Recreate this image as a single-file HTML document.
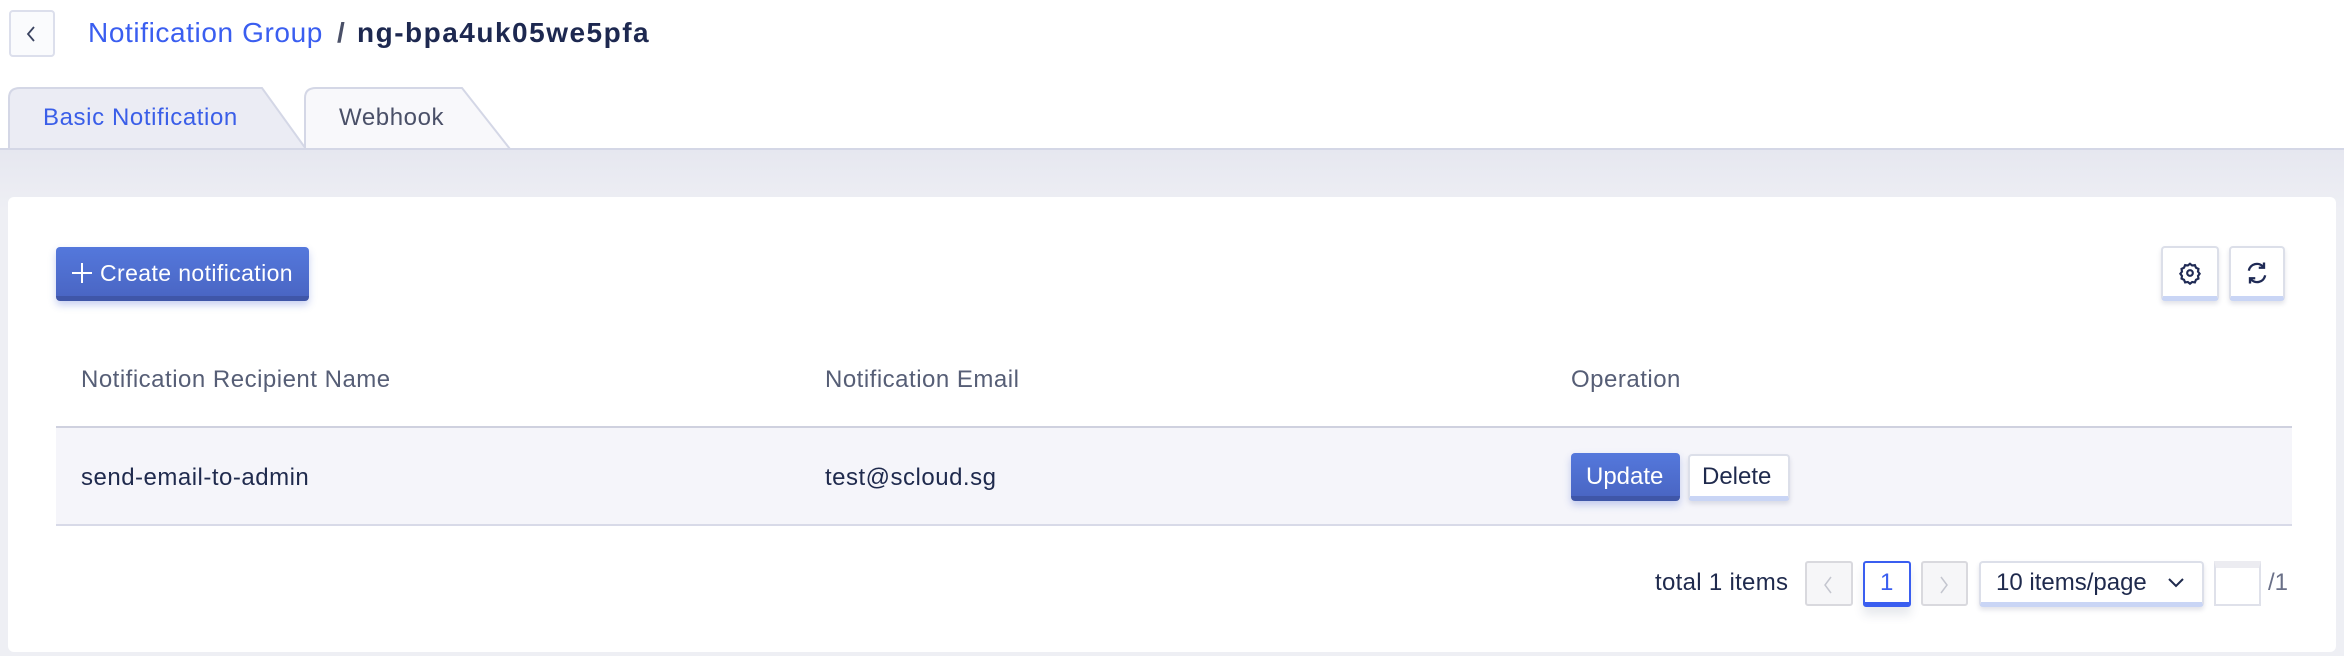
<!DOCTYPE html>
<html><head><meta charset="utf-8"><style>
*{box-sizing:border-box;margin:0;padding:0}
body{width:2344px;height:656px;background:#fff;font-family:"Liberation Sans",sans-serif;position:relative;overflow:hidden;color:#1f2a4d}
.a{position:absolute}
.btnw{position:absolute;background:#fff;border:2px solid #dcdfe9;border-bottom:5px solid #c9d5f5;border-radius:4px;box-shadow:0 3px 5px rgba(60,70,110,.15)}
.t{position:absolute;white-space:nowrap;line-height:1}
.tb{font-size:24px;letter-spacing:.5px}
</style></head><body>
<div class="a" style="left:9px;top:10px;width:46px;height:47px;border:2px solid #dcdfec;border-radius:4px;background:#fafbfd"></div>
<svg class="a" style="left:22px;top:24px" width="20" height="20" viewBox="0 0 20 20"><path d="M12 3 L6 10 L12 17" fill="none" stroke="#3a4360" stroke-width="1.8"/></svg>
<div class="t" style="left:88px;top:19px;font-size:28px;letter-spacing:.6px;color:#3a5ef0">Notification Group</div>
<div class="t" style="left:337px;top:19px;font-size:28px;color:#4a5068;font-weight:bold">/</div>
<div class="t" style="left:357px;top:19px;font-size:28px;letter-spacing:1.5px;color:#1d2850;font-weight:bold">ng-bpa4uk05we5pfa</div>
<svg class="a" style="left:0;top:84px" width="2344" height="70">
<path d="M9 65 L9 14 Q9 4 20 4 L262 4 L306 65 Z" fill="#ebecf4" stroke="#d4d7e6" stroke-width="2"/>
<path d="M305 65 L305 14 Q305 4 316 4 L462 4 L510 65 Z" fill="#f8f8fb" stroke="#d4d7e6" stroke-width="2"/>
<line x1="0" y1="65" x2="9" y2="65" stroke="#d4d7e6" stroke-width="2"/>
<line x1="510" y1="65" x2="2344" y2="65" stroke="#d4d7e6" stroke-width="2"/>
</svg>
<div class="t" style="left:43px;top:106px;font-size:24px;letter-spacing:.6px;color:#3a5ee8">Basic Notification</div>
<div class="t" style="left:339px;top:106px;font-size:24px;letter-spacing:.6px;color:#4a5068">Webhook</div>
<div class="a" style="left:0;top:150px;width:2344px;height:506px;background:linear-gradient(#e6e7f0,#eeeff4 60px,#eeeff4)"></div>
<div class="a" style="left:8px;top:197px;width:2328px;height:455px;background:#fff;border-radius:6px"></div>
<div class="a" style="left:56px;top:247px;width:253px;height:54px;background:linear-gradient(#5478dc,#4a66c4);border-bottom:5px solid #3f56a8;border-radius:4px;box-shadow:0 4px 8px rgba(70,100,210,.3)"></div>
<svg class="a" style="left:71px;top:262px" width="22" height="22"><path d="M11 1V21M1 11H21" stroke="#fff" stroke-width="2"/></svg>
<div class="t" style="left:100px;top:262px;font-size:23px;letter-spacing:.4px;color:#fff">Create notification</div>
<div class="btnw" style="left:2161px;top:246px;width:58px;height:55px"></div>
<svg class="a" style="left:2177px;top:260px" width="26" height="26" viewBox="0 0 24 24"><path d="M12 3.5l2 1.6 2.5-.4 1 2.4 2.3 1.1-.4 2.5 1.5 2-1.5 2 .4 2.5-2.3 1.1-1 2.4-2.5-.4-2 1.6-2-1.6-2.5.4-1-2.4-2.3-1.1.4-2.5-1.5-2 1.5-2-.4-2.5 2.3-1.1 1-2.4 2.5.4z" fill="none" stroke="#1f2a55" stroke-width="2"/><circle cx="12" cy="12" r="2.6" fill="none" stroke="#1f2a55" stroke-width="2"/></svg>
<div class="btnw" style="left:2229px;top:246px;width:56px;height:55px"></div>
<svg class="a" style="left:2243px;top:259px" width="28" height="28" viewBox="0 0 24 24"><path d="M5 10a7 7 0 0 1 12.5-3M19 14a7 7 0 0 1-12.5 3" fill="none" stroke="#1f2a55" stroke-width="2"/><path d="M18 3v4.5h-4.5M6 21v-4.5h4.5" fill="none" stroke="#1f2a55" stroke-width="2"/></svg>
<div class="t tb" style="left:81px;top:368px;color:#565e76">Notification Recipient Name</div>
<div class="t tb" style="left:825px;top:368px;color:#565e76">Notification Email</div>
<div class="t tb" style="left:1571px;top:368px;color:#565e76">Operation</div>
<div class="a" style="left:56px;top:426px;width:2236px;height:100px;background:#f5f5fa;border-top:2px solid #cfd1df;border-bottom:2px solid #d8dae8"></div>
<div class="t tb" style="left:81px;top:466px;color:#1f2a4d">send-email-to-admin</div>
<div class="t tb" style="left:825px;top:466px;color:#1f2a4d">test@scloud.sg</div>
<div class="a" style="left:1571px;top:453px;width:109px;height:48px;background:linear-gradient(#5478dc,#4a66c4);border-bottom:5px solid #3f56a8;border-radius:4px;box-shadow:0 4px 8px rgba(70,100,210,.3)"></div>
<div class="t" style="left:1586px;top:465px;font-size:24px;color:#fff">Update</div>
<div class="btnw" style="left:1688px;top:454px;width:102px;height:47px"></div>
<div class="t" style="left:1702px;top:465px;font-size:24px;color:#1f2a4d">Delete</div>
<div class="t" style="left:1655px;top:571px;font-size:24px;letter-spacing:.3px;color:#1f2a4d">total 1 items</div>
<div class="a" style="left:1805px;top:561px;width:48px;height:45px;background:#f6f6f8;border:2px solid #d9d9de;border-radius:3px"></div>
<svg class="a" style="left:1820px;top:574px" width="16" height="22"><path d="M11 3L5 11L11 19" fill="none" stroke="#c4c6cf" stroke-width="1.5"/></svg>
<div class="a" style="left:1863px;top:561px;width:48px;height:46px;background:#fff;border:2px solid #3a5ef0;border-bottom-width:5px;border-radius:3px;box-shadow:0 8px 10px rgba(60,70,110,.12)"></div>
<div class="t" style="left:1880px;top:571px;font-size:24px;color:#3a5ef0">1</div>
<div class="a" style="left:1921px;top:561px;width:47px;height:45px;background:#f6f6f8;border:2px solid #d9d9de;border-radius:3px"></div>
<svg class="a" style="left:1936px;top:574px" width="16" height="22"><path d="M5 3L11 11L5 19" fill="none" stroke="#c4c6cf" stroke-width="1.5"/></svg>
<div class="btnw" style="left:1979px;top:561px;width:225px;height:46px;border-width:2px 2px 5px 2px"></div>
<div class="t" style="left:1996px;top:571px;font-size:24px;color:#1f2a4d">10 items/page</div>
<svg class="a" style="left:2167px;top:577px" width="18" height="12"><path d="M2 2L9 9L16 2" fill="none" stroke="#1f2a4d" stroke-width="2"/></svg>
<div class="a" style="left:2214px;top:561px;width:47px;height:45px;background:#fff;border:2px solid #dfe1ea;border-top:7px solid #ececf1"></div>
<div class="t" style="left:2268px;top:571px;font-size:24px;color:#6a7088">/1</div>
</body></html>
